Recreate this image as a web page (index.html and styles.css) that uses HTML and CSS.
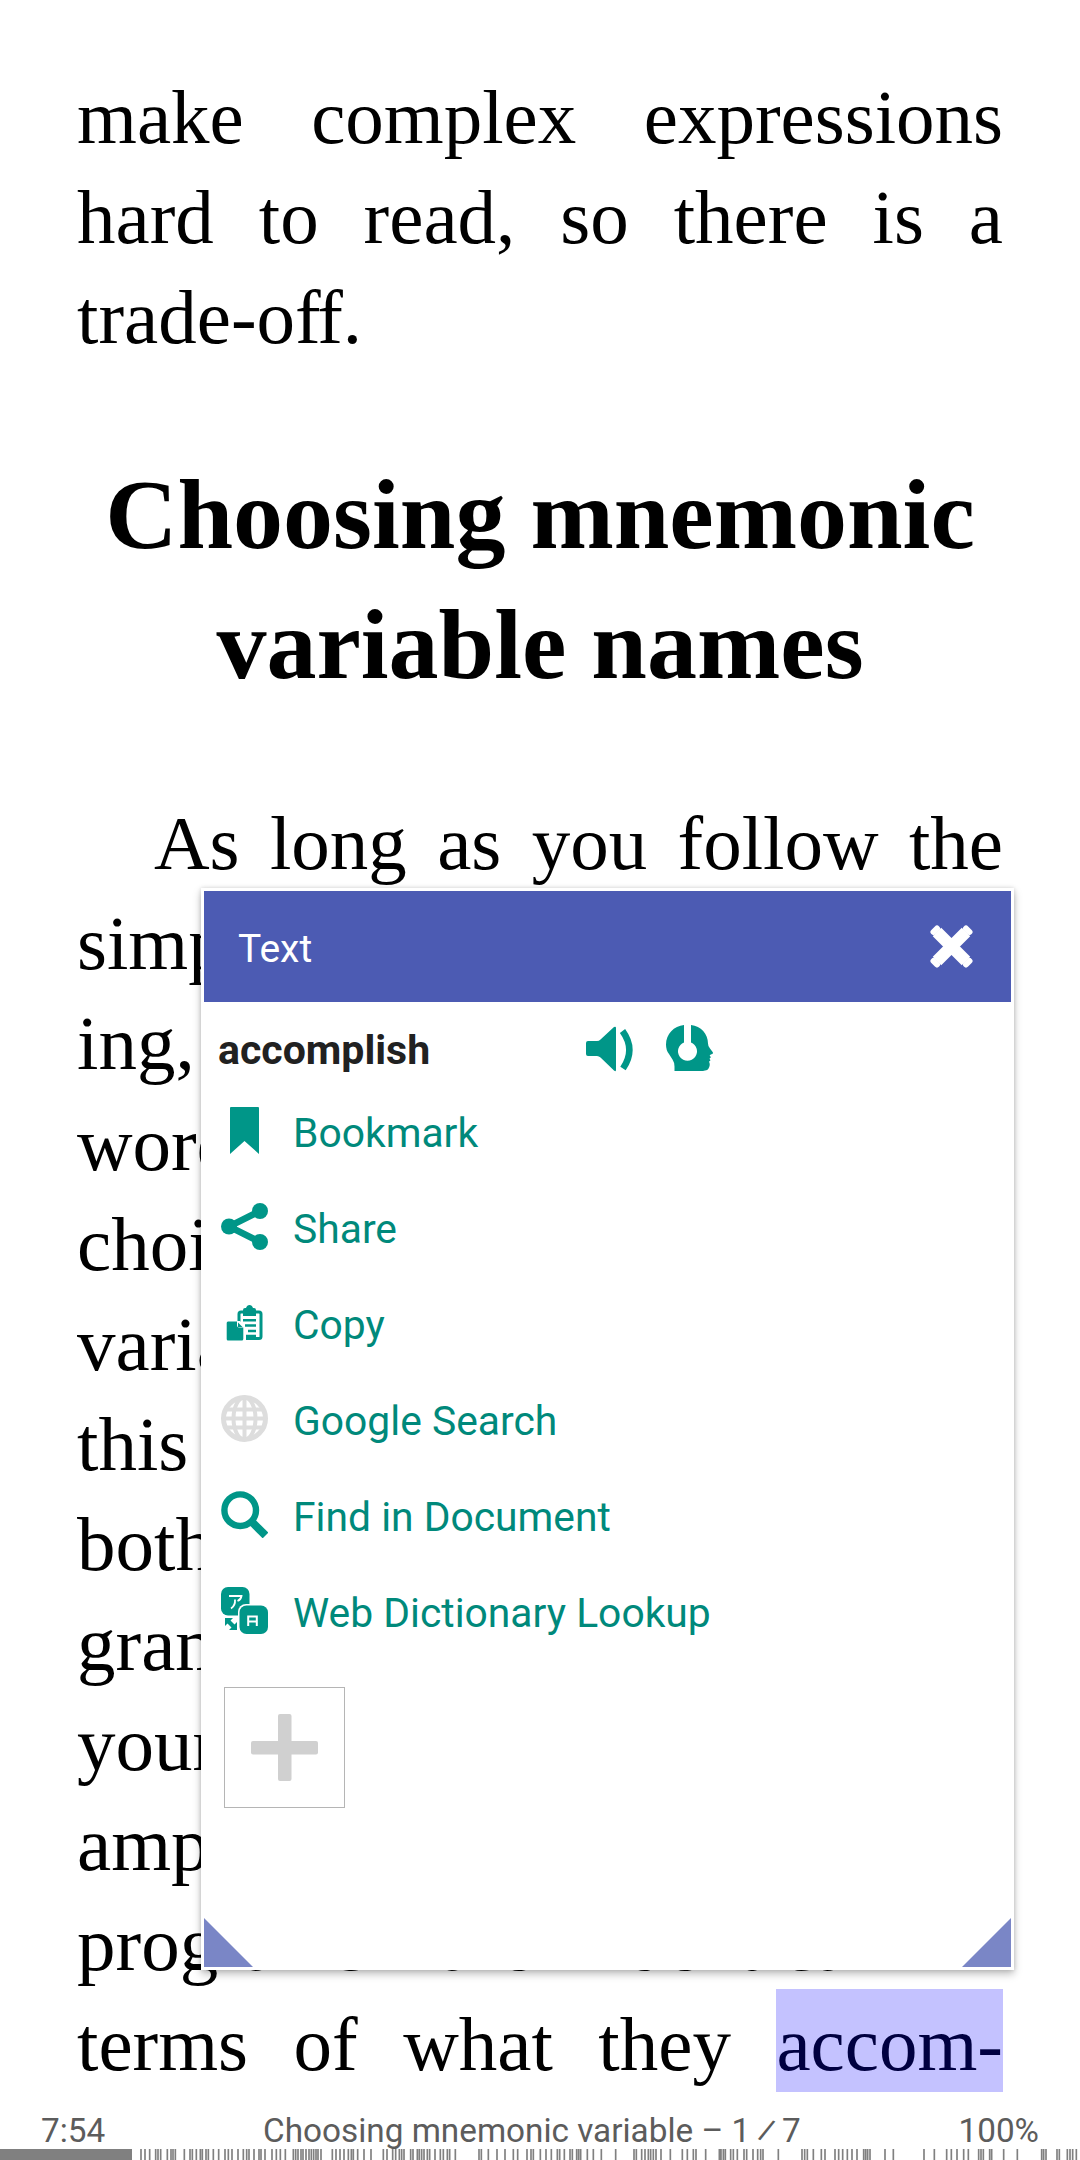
FILE: index.html
```html
<!DOCTYPE html>
<html lang="en">
<head>
<meta charset="utf-8">
<title>Choosing mnemonic variable names</title>
<link rel="stylesheet" href="styles.css">
</head>
<body>
<main class="page">
  <article class="book">
    <p class="para">
      <span class="line">make complex expressions</span>
      <span class="line">hard to read, so there is a</span>
      <span class="line line-end">trade-o<span class="tight">f</span>f.</span>
    </p>
    <h1 class="heading">Choosing mnemonic<br>variable names</h1>
    <p class="para">
      <span class="line line-first">As long as you follow the</span>
      <span class="line">simple rules of variable nam-</span>
      <span class="line">ing, and avoid reserved</span>
      <span class="line">words, you have a lot of</span>
      <span class="line">choice when you name your</span>
      <span class="line">variables. In the beginning,</span>
      <span class="line">this choice can be confusing</span>
      <span class="line">both when you read a pro-</span>
      <span class="line">gram and when you write</span>
      <span class="line">your own programs. For ex-</span>
      <span class="line">ample, the following three</span>
      <span class="line">programs are identical in</span>
      <span class="line">terms of what they <mark class="selected">accom-</mark></span>
    </p>
  </article>

  <footer class="status">
    <div class="status-text">
      <span>7:54</span>
      <span class="status-title">Choosing mnemonic variable – 1 <span class="slash">⁄</span> 7</span>
      <span>100%</span>
    </div>
    <svg class="progress" viewBox="0 0 3240 33" preserveAspectRatio="none">
      <rect width="396" height="33" fill="#808080"/>
      <path id="ticks" stroke="#808080" stroke-width="5" d="M423 0v33M435 0v33M449 0v33M467 0v33M474 0v33M482 0v33M502 0v33M513 0v33M519 0v33M526 0v33M553 0v33M570 0v33M577 0v33M589 0v33M601 0v33M607 0v33M618 0v33M625 0v33M640 0v33M656 0v33M675 0v33M685 0v33M696 0v33M714 0v33M730 0v33M740 0v33M747 0v33M762 0v33M777 0v33M783 0v33M795 0v33M816 0v33M829 0v33M841 0v33M856 0v33M880 0v33M887 0v33M894 0v33M903 0v33M909 0v33M918 0v33M927 0v33M934 0v33M941 0v33M948 0v33M954 0v33M963 0v33M997 0v33M1008 0v33M1020 0v33M1032 0v33M1045 0v33M1054 0v33M1060 0v33M1073 0v33
      M1092 0v33M1113 0v33M1150 0v33M1161 0v33M1178 0v33M1187 0v33M1198 0v33M1205 0v33M1212 0v33M1232 0v33M1239 0v33M1252 0v33M1258 0v33M1265 0v33M1272 0v33M1282 0v33M1289 0v33M1305 0v33M1321 0v33M1330 0v33M1342 0v33M1349 0v33M1366 0v33M1437 0v33M1444 0v33M1465 0v33M1491 0v33M1515 0v33M1540 0v33M1553 0v33M1581 0v33M1593 0v33M1600 0v33M1621 0v33M1638 0v33M1654 0v33M1672 0v33M1679 0v33M1693 0v33M1710 0v33M1717 0v33M1730 0v33M1736 0v33M1742 0v33M1762 0v33M1780 0v33M1804 0v33M1847 0v33M1902 0v33M1909 0v33M1925 0v33M1935 0v33M1945 0v33M1952 0v33M1960 0v33M1968 0v33M1983 0v33M2011 0v33M2047 0v33M2062 0v33M2080 0v33M2088 0v33M2117 0v33M2158 0v33
      M2163 0v33M2170 0v33M2176 0v33M2192 0v33M2200 0v33M2212 0v33M2232 0v33M2240 0v33M2259 0v33M2273 0v33M2282 0v33M2289 0v33M2335 0v33M2406 0v33M2414 0v33M2422 0v33M2440 0v33M2464 0v33M2475 0v33M2505 0v33M2516 0v33M2528 0v33M2542 0v33M2556 0v33M2571 0v33M2591 0v33M2597 0v33M2603 0v33M2610 0v33M2655 0v33M2680 0v33M2772 0v33M2803 0v33M2840 0v33M2854 0v33M2871 0v33M2891 0v33M2905 0v33M2936 0v33M2943 0v33M2950 0v33M2969 0v33M2975 0v33M3011 0v33M3052 0v33M3125 0v33M3131 0v33M3138 0v33M3171 0v33M3178 0v33M3202 0v33M3210 0v33M3218 0v33M3229 0v33"/>
    </svg>
  </footer>

  <section class="popup">
    <header class="popup-head">
      <span>Text</span>
      <svg class="close" viewBox="0 0 43 43"><path d="M7 7 36 36M36 7 7 36" fill="none" stroke="#fff" stroke-width="12"/><path d="M7 3.500 3.500 7M36 3.500 39.500 7M7 39.500 3.500 36M36 39.500 39.500 36" fill="none" stroke="#fff" stroke-width="6" stroke-linecap="round"/></svg>
    </header>
    <div class="word-row">
      <strong class="word">accomplish</strong>
      <svg class="icon" viewBox="0 0 47 47" fill="#009688"><path d="M0 18q0-2 2-2h9q2 0 3.500-1.500L28 2q2-1 2 1v42q0 2-2 .5L14.500 32.500Q13 31 11 31H2q-2 0-2-2z"/><path d="M36.500 6Q50 24.500 37 43.500" fill="none" stroke="#009688" stroke-width="6.500"/></svg>
      <svg class="icon" viewBox="0 0 47 47" fill="#009688"><path d="M18 0v17.500a9.500 9.500 0 1 0 7 0V0c10 1 17 9 17 18.500q0 3 2 5l2.800 3.800q.5 1.200-.8 1.700l-2 1q-.8 1 1 2l-1.500 1.700 1 1.600-1.500 1.500q1.500 2.700 0 5.700-1 3-4 3l-2 .5H8.500v-4.500q0-4-2-7l-3.500-5.500Q0 25.500 0 19.500C0 9 8 1 18 0z"/></svg>
    </div>
    <ul class="menu">
      <li class="item">
        <svg class="icon" viewBox="0 0 47 47" fill="#009688"><path d="M9 1q0-1 1-1h27q1 0 1 1v46L23.500 34 9 47z"/></svg>
        <span>Bookmark</span>
      </li>
      <li class="item">
        <svg class="icon" viewBox="0 0 47 47" fill="#009688"><path d="M39 8 8 23.500 39 39" fill="none" stroke="#009688" stroke-width="6.500"/><circle cx="39" cy="8" r="8"/><circle cx="8" cy="23.500" r="8"/><circle cx="39" cy="39" r="8"/></svg>
        <span>Share</span>
      </li>
      <li class="item">
        <svg class="icon" viewBox="0 0 47 47" fill="#009688"><rect x="18" y="13" width="22" height="26.500" rx="2" fill="none" stroke="#009688" stroke-width="3"/><path d="M22 17v-6q0-2 2-2h1q1-3 3.500-3T32 9h1q2 0 2 2v6z"/><path d="M22 21.200h13M24 26.500h11M27 32h8M24 37h11" stroke="#009688" stroke-width="2.600"/><path d="M4 22h15l6 7v14H4z" fill="#fff"/><path d="M7 22.500h9v4q0 2 2 2h4.300V40q0 1.500-1.500 1.500H7Q5.700 41.500 5.700 40V24q0-1.500 1.300-1.500z"/><path d="M17 23.500l4.500 4.500H17z"/></svg>
        <span>Copy</span>
      </li>
      <li class="item">
        <svg class="icon" viewBox="0 0 47 47" fill="none" stroke="#ddd" stroke-width="4"><circle cx="23.500" cy="23.500" r="21"  stroke-width="5"/><path d="M23.500 3v41M3 23.500h41M6 14.500h35M6 32.500h35"/><ellipse cx="23.500" cy="23.500" rx="11" ry="21"/></svg>
        <span>Google Search</span>
      </li>
      <li class="item">
        <svg class="icon" viewBox="0 0 47 47" fill="none" stroke="#009688"><circle cx="19.200" cy="19.200" r="15.800" stroke-width="6.400"/><path d="M30.500 30.500 44.500 44.500" stroke-width="8"/></svg>
        <span>Find in Document</span>
      </li>
      <li class="item">
        <svg class="icon" viewBox="0 0 47 47" fill="#009688"><rect width="28.500" height="28.500" rx="7"/><rect x="17" y="17" width="32" height="32" rx="8" fill="#fff"/><rect x="18.500" y="18.500" width="28.500" height="28.500" rx="7"/><path d="M8 9h12.500q-.5 3.500-4 5M14 12.500q.5 6-4 9" fill="none" stroke="#fff" stroke-width="1.800"/><path d="M27.200 39V29.500h8.600V39M27.200 34.500h8.600" fill="none" stroke="#fff" stroke-width="2"/><path d="M4 31h8l-2.500 2.500 4 4L16 35v8H8l2.500-2.500-4-4L4 39z"/></svg>
        <span>Web Dictionary Lookup</span>
      </li>
    </ul>
    <div class="add">
      <svg class="plus" viewBox="0 0 67 67" fill="#d0d0d0"><rect x="27" width="13.500" height="67" rx="2"/><rect y="27" width="67" height="13.500" rx="2"/></svg>
    </div>
    <div class="grips"><i class="grip grip-left"></i><i class="grip grip-right"></i></div>
  </section>
</main>
</body>
</html>
```

FILE: styles.css
```css
* { box-sizing: border-box; }
body { margin: 0; background: #fff; }

.page {
  position: relative;
  display: flex;
  flex-direction: column;
  width: 1080px;
  height: 2160px;
  overflow: hidden;
}

/* Book text */
.book {
  padding: 67px 77px 0;
  font-family: "Liberation Serif", serif;
  color: #000;
}
.para { margin: 0; font-size: 77px; line-height: 100.1px; }
.line {
  display: block;
  white-space: nowrap;
  text-align: justify;
  text-align-last: justify;
}
.line-end { text-align-last: left; }
.line-first { padding-left: 77px; }
.tight { letter-spacing: -3.500px; }
.heading {
  margin: 83px 0;
  font-size: 100px;
  line-height: 130px;
  font-weight: 700;
  text-align: center;
}
.selected {
  color: #000040;
  background: #c4c2ff;
  padding: 12px 0 5px;
}

/* Status line */
.status { margin-top: auto; }
.status-text {
  display: flex;
  justify-content: space-between;
  padding: 1px 41px 0;
  font: 33.300px/37px Roboto, sans-serif;
  color: #5c5c5c;
}
.slash { display: inline-block; transform: scaleX(1.300); }
.progress { display: block; width: 1080px; height: 11px; }

/* Selection popup */
.popup {
  position: absolute;
  left: 201px;
  top: 888px;
  width: 813px;
  height: 1082px;
  display: flex;
  flex-direction: column;
  padding: 3px;
  background: #fff;
  box-shadow: 0 4px 8px rgba(0, 0, 0, .26), 0 0 4px rgba(0, 0, 0, .14);
  font-family: Roboto, sans-serif;
}
.popup-head {
  display: flex;
  align-items: center;
  justify-content: space-between;
  height: 111px;
  padding: 4px 38px 0 34px;
  background: #4c5bb3;
  color: #fff;
  font-size: 39px;
}
.close { width: 43px; height: 43px; margin-top: -4px; }
.word-row {
  display: flex;
  align-items: center;
  height: 95px;
  padding-left: 14px;
}
.word { width: 368px; font-size: 41px; color: #212121; }
.icon { flex: none; width: 47px; height: 47px; }
.word-row .icon { margin-right: 33px; margin-top: -3px; }
.menu { margin: -12px 0 0; padding: 0 17px; list-style: none; }
.item {
  display: flex;
  align-items: center;
  gap: 25px;
  height: 96px;
  font-size: 40.800px;
  color: #00897b;
}
.item .icon { margin-top: -5px; }
.add {
  display: flex;
  align-items: center;
  justify-content: center;
  width: 121px;
  height: 121px;
  margin: 26px 0 0 20px;
  border: 1px solid #b5b5b5;
}
.plus { width: 67px; height: 67px; }
.grips { display: flex; justify-content: space-between; margin-top: auto; }
.grip { width: 49px; height: 49px; background: #7a86c6; }
.grip-left { clip-path: polygon(0 0, 100% 100%, 0 100%); }
.grip-right { clip-path: polygon(100% 0, 100% 100%, 0 100%); }
```
